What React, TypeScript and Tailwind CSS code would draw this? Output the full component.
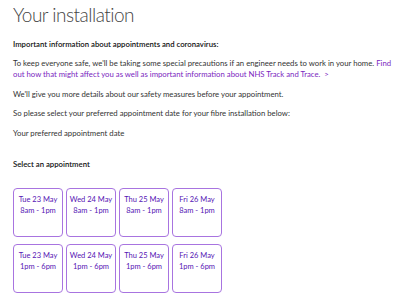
const slots = [
  { day: "Tue 23 May", time: "8am - 1pm" },
  { day: "Wed 24 May", time: "8am - 1pm" },
  { day: "Thu 25 May", time: "8am - 1pm" },
  { day: "Fri 26 May", time: "8am - 1pm" },
  { day: "Tue 23 May", time: "1pm - 6pm" },
  { day: "Wed 24 May", time: "1pm - 6pm" },
  { day: "Thu 25 May", time: "1pm - 6pm" },
  { day: "Fri 26 May", time: "1pm - 6pm" },
];

const SlotCard = ({ day, time }: { day: string; time: string }) => (
  <button className="flex h-[49px] w-[50px] flex-col items-center rounded-[4px] border-[1.5px] border-[#a874e0] bg-white pt-[5px] text-[7.5px] leading-[11px] text-[#5514b4]">
    <span>{day}</span>
    <span>{time}</span>
  </button>
);

export default function App() {
  return (
    <div className="h-[301px] w-[400px] overflow-hidden bg-white pl-[13px] pr-[4px] font-['Lato',sans-serif] text-[7.75px] leading-[11px] text-[#333]">
      <h1 className="pt-[2px] text-[19px] font-light leading-[26px] tracking-[-0.5px] text-[#444]">
        Your installation
      </h1>

      <p className="mt-[11px] font-semibold text-[#111]">
        Important information about appointments and coronavirus:
      </p>

      <p className="mt-[8px]">
        To keep everyone safe, we'll be taking some special precautions if an
        engineer needs to work in your home.{" "}
        <a href="#" className="text-[#7b1fc0]">
          Find out how that might affect you as well as important information
          about NHS Track and Trace. &nbsp;&gt;
        </a>
      </p>

      <p className="mt-[9px]">
        We'll give you more details about our safety measures before your
        appointment.
      </p>

      <p className="mt-[8px]">
        So please select your preferred appointment date for your fibre
        installation below:
      </p>

      <p className="mt-[9px]">Your preferred appointment date</p>

      <p className="mt-[20px] font-semibold text-[#111]">Select an appointment</p>

      <div className="mt-[18px] grid w-fit grid-cols-4 gap-x-[3px] gap-y-[7px]">
        {slots.map((s, i) => (
          <SlotCard key={i} day={s.day} time={s.time} />
        ))}
      </div>
    </div>
  );
}
